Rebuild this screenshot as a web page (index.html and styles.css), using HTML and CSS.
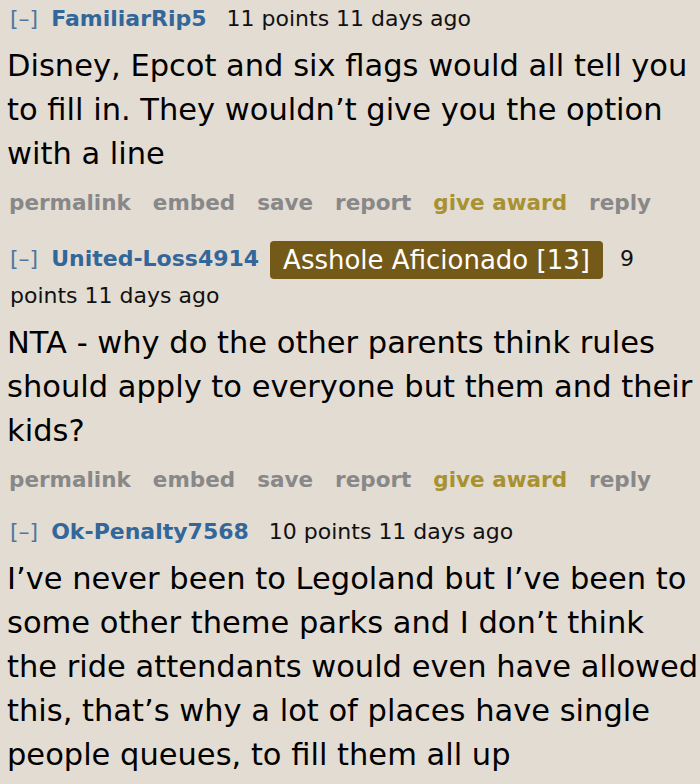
FILE: index.html
```html
<!DOCTYPE html>
<html>
<head>
<meta charset="utf-8">
<link rel="stylesheet" href="styles.css">
</head>
<body>
<div class="thread">
  <div class="comment">
    <p class="tagline"><span class="expand">[–]</span> <a class="author">FamiliarRip5</a> <span class="score">11 points 11 days ago</span></p>
    <div class="md">Disney, Epcot and six flags would all tell you to fill in. They wouldn’t give you the option with a line</div>
    <ul class="buttons"><li>permalink</li><li>embed</li><li>save</li><li>report</li><li class="award">give award</li><li>reply</li></ul>
  </div>
  <div class="comment">
    <p class="tagline"><span class="expand">[–]</span> <a class="author">United-Loss4914</a> <span class="flair">Asshole Aficionado [13]</span> <span class="score">9 points 11 days ago</span></p>
    <div class="md">NTA - why do the other parents think rules should apply to everyone but them and their kids?</div>
    <ul class="buttons"><li>permalink</li><li>embed</li><li>save</li><li>report</li><li class="award">give award</li><li>reply</li></ul>
  </div>
  <div class="comment">
    <p class="tagline"><span class="expand">[–]</span> <a class="author">Ok-Penalty7568</a> <span class="score">10 points 11 days ago</span></p>
    <div class="md">I’ve never been to Legoland but I’ve been to some other theme parks and I don’t think the ride attendants would even have allowed this, that’s why a lot of places have single people queues, to fill them all up</div>
  </div>
</div>
</body>
</html>
```
FILE: styles.css
```css
html, body {
  margin: 0;
  padding: 0;
  background: #e3dcd3;
}
body {
  font-family: "DejaVu Sans", Verdana, sans-serif;
  color: #000;
  overflow: hidden;
}
.thread {
  padding: 0 0 0 7px;
}
.comment {
  margin-bottom: 14px;
}
.comment:first-child {
  margin-bottom: 18px;
}
.tagline {
  margin: 0;
  padding: 2px 0 0 3px;
  font-size: 22px;
  line-height: 34px;
  color: #111;
}
.expand {
  color: #336699;
  opacity: 0.85;
}
.author {
  color: #336699;
  font-weight: bold;
  margin-left: 6px;
  margin-right: 4px;
}
.score {
  margin-left: 9px;
}
.flair + .score {
  margin-left: 0;
}
.flair {
  background: #745a18;
  color: #fff;
  font-size: 26px;
  line-height: 37px;
  padding: 4px 13px;
  border-radius: 4px;
  margin-right: 10px;
  vertical-align: -3px;
}
.md {
  margin-top: 8px;
  font-size: 30.5px;
  line-height: 44px;
}
.buttons {
  list-style: none;
  margin: 8px 0 0 0;
  padding: 0 0 0 2px;
  display: flex;
  gap: 22px;
  font-size: 21.5px;
  line-height: 38px;
  font-weight: bold;
  color: #888;
}
.buttons .award {
  color: #a8912f;
}
```
